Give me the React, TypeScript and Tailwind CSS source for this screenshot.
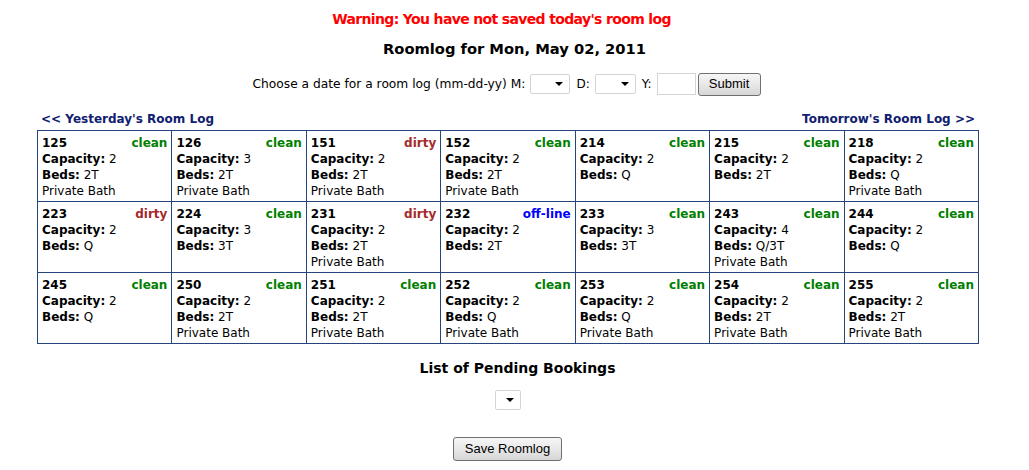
type Room = {
  num: string;
  status: 'clean' | 'dirty' | 'off-line';
  cap: string;
  beds: string;
  bath?: boolean;
};

const rows: Room[][] = [
  [
    { num: '125', status: 'clean', cap: '2', beds: '2T', bath: true },
    { num: '126', status: 'clean', cap: '3', beds: '2T', bath: true },
    { num: '151', status: 'dirty', cap: '2', beds: '2T', bath: true },
    { num: '152', status: 'clean', cap: '2', beds: '2T', bath: true },
    { num: '214', status: 'clean', cap: '2', beds: 'Q' },
    { num: '215', status: 'clean', cap: '2', beds: '2T' },
    { num: '218', status: 'clean', cap: '2', beds: 'Q', bath: true },
  ],
  [
    { num: '223', status: 'dirty', cap: '2', beds: 'Q' },
    { num: '224', status: 'clean', cap: '3', beds: '3T' },
    { num: '231', status: 'dirty', cap: '2', beds: '2T', bath: true },
    { num: '232', status: 'off-line', cap: '2', beds: '2T' },
    { num: '233', status: 'clean', cap: '3', beds: '3T' },
    { num: '243', status: 'clean', cap: '4', beds: 'Q/3T', bath: true },
    { num: '244', status: 'clean', cap: '2', beds: 'Q' },
  ],
  [
    { num: '245', status: 'clean', cap: '2', beds: 'Q' },
    { num: '250', status: 'clean', cap: '2', beds: '2T', bath: true },
    { num: '251', status: 'clean', cap: '2', beds: '2T', bath: true },
    { num: '252', status: 'clean', cap: '2', beds: 'Q', bath: true },
    { num: '253', status: 'clean', cap: '2', beds: 'Q', bath: true },
    { num: '254', status: 'clean', cap: '2', beds: '2T', bath: true },
    { num: '255', status: 'clean', cap: '2', beds: '2T', bath: true },
  ],
];

const statusColor = {
  clean: 'text-[#008000]',
  dirty: 'text-[#a52a2a]',
  'off-line': 'text-[#0000ff]',
};

const FakeSelect = ({ width }: { width: string }) => (
  <div className={`${width} h-[20px] bg-white border border-[#d4d4d4] rounded-[2px] flex items-center justify-end pr-[6px]`}>
    <div className="w-0 h-0 border-l-[4px] border-r-[4px] border-t-[4px] border-l-transparent border-r-transparent border-t-black" />
  </div>
);

const Button = ({ label, className }: { label: string; className: string }) => (
  <button
    className={`${className} border border-[#707070] rounded-[3px] bg-gradient-to-b from-[#f6f6f6] via-[#e8e8e8] to-[#d6d6d6] font-['Liberation_Sans',sans-serif] text-[13px] text-black`}
  >
    {label}
  </button>
);

const RoomCell = ({ room }: { room: Room }) => (
  <td className="border border-[#26457f] align-top px-[4px] pt-[4px] pb-[2px] h-[71px] w-[134px]">
    <div className="flex justify-between leading-[16px] font-bold">
      <span>{room.num}</span>
      <span className={statusColor[room.status]}>{room.status}</span>
    </div>
    <div className="leading-[16px]">
      <span className="font-bold">Capacity:</span> {room.cap}
    </div>
    <div className="leading-[16px]">
      <span className="font-bold">Beds:</span> {room.beds}
    </div>
    {room.bath && <div className="leading-[16px]">Private Bath</div>}
  </td>
);

export default function App() {
  return (
    <div className="w-[1029px] h-[470px] bg-white font-['DejaVu_Sans',sans-serif] text-[12px] text-black">
      <div className="pt-[10px] pr-[26px] text-center text-[14px] tracking-[-0.65px] leading-[18px] font-bold text-[#ff0000]">
        Warning: You have not saved today's room log
      </div>
      <div className="mt-[12px] text-center text-[14.7px] leading-[18px] font-bold">
        Roomlog for Mon, May 02, 2011
      </div>
      <div className="mt-[14px] pr-[16px] flex items-center justify-center h-[24px]">
        <span className="mr-[5px] text-[12.25px]">Choose a date for a room log (mm-dd-yy) M:</span>
        <FakeSelect width="w-[40px]" />
        <span className="ml-[6px] mr-[5px]">D:</span>
        <FakeSelect width="w-[41px]" />
        <span className="ml-[6px] mr-[5px]">Y:</span>
        <div className="w-[39px] h-[22px] bg-white border border-[#d4d4d4]" />
        <Button label="Submit" className="ml-[2px] w-[63px] h-[23px]" />
      </div>
      <div className="ml-[37px] w-[942px]">
        <div className="mt-[15px] flex justify-between px-[4px] leading-[16px] font-bold text-[#102070]">
          <span>&lt;&lt; Yesterday's Room Log</span>
          <span>Tomorrow's Room Log &gt;&gt;</span>
        </div>
        <table className="mt-[3px] w-full border-collapse table-fixed">
          <tbody>
            {rows.map((row, i) => (
              <tr key={i}>
                {row.map(room => (
                  <RoomCell key={room.num} room={room} />
                ))}
              </tr>
            ))}
          </tbody>
        </table>
      </div>
      <div className="mt-[15px] pl-[6px] text-center text-[14px] leading-[18px] font-bold">
        List of Pending Bookings
      </div>
      <div className="mt-[13px] pr-[13px] flex justify-center">
        <FakeSelect width="w-[26px]" />
      </div>
      <div className="mt-[27px] pr-[14px] flex justify-center">
        <Button label="Save Roomlog" className="w-[109px] h-[24px]" />
      </div>
    </div>
  );
}
